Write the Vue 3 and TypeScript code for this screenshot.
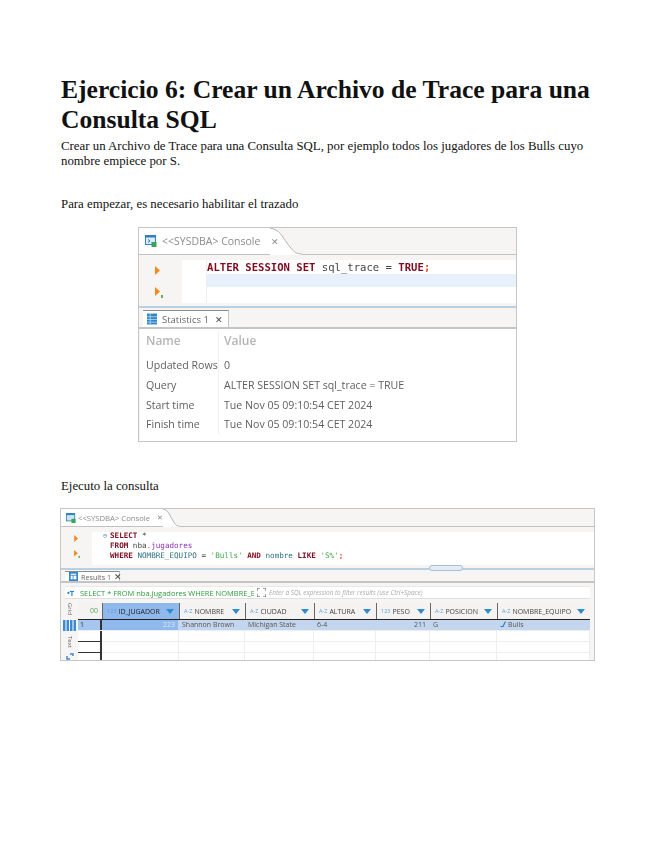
<script setup lang="ts">
const stats: [string, string][] = [
  ['Updated Rows', '0'],
  ['Query', 'ALTER SESSION SET sql_trace = TRUE'],
  ['Start time', 'Tue Nov 05 09:10:54 CET 2024'],
  ['Finish time', 'Tue Nov 05 09:10:54 CET 2024'],
]
interface Col { name: string; type: string; w: number; val: string; right?: boolean; link?: boolean }
const cols: Col[] = [
  { name: 'ID_JUGADOR', type: '123', w: 77, val: '223', right: true },
  { name: 'NOMBRE', type: 'A-Z', w: 66, val: 'Shannon Brown' },
  { name: 'CIUDAD', type: 'A-Z', w: 69, val: 'Michigan State' },
  { name: 'ALTURA', type: 'A-Z', w: 62, val: '6-4' },
  { name: 'PESO', type: '123', w: 54, val: '211', right: true },
  { name: 'POSICION', type: 'A-Z', w: 67, val: 'G' },
  { name: 'NOMBRE_EQUIPO', type: 'A-Z', w: 93, val: 'Bulls', link: true },
]
</script>

<template>
  <main class="page">
    <h1 class="title">Ejercicio 6: Crear un Archivo de Trace para una Consulta SQL</h1>
    <p class="intro">Crear un Archivo de Trace para una Consulta SQL, por ejemplo todos los jugadores de los Bulls cuyo nombre empiece por S.</p>
    <p class="lead first">Para empezar, es necesario habilitar el trazado</p>

    <section class="shot shot-a">
      <header class="tabbar">
        <div class="ctab">
          <svg class="ico" viewBox="0 0 12 12" width="12" height="12">
            <rect x="0.5" y="0.5" width="10" height="9" fill="#dcebf7" stroke="#2f7fc1" />
            <rect x="0.5" y="0.5" width="10" height="2" fill="#2f7fc1" />
            <path d="M3 4.500 5 6 3 7.500" fill="none" stroke="#2f7fc1" />
            <rect x="6.500" y="7" width="5" height="5" fill="#3aa655" />
          </svg>
          <span>&lt;&lt;SYSDBA&gt; Console</span>
          <svg class="curve" viewBox="0 0 32 27" width="32" height="27">
            <path d="M0 0C10 2 12 8 17 15 23 23 25 26 32 26V27H0Z" fill="#fff" />
            <path d="M0 0C10 2 12 8 17 15 23 23 25 26 32 26" fill="none" stroke="#b4b4b4" />
          </svg>
          <span class="x">✕</span>
        </div>
      </header>
      <div class="editor">
        <div class="gutter">
          <svg class="run" viewBox="0 0 6 9" width="6" height="9"><path d="M0 0 5 4.500 0 9Z" fill="#f08a1d" /></svg>
          <svg class="run" viewBox="0 0 8 11" width="8" height="11"><path d="M0 0 5 4.500 0 9Z" fill="#f08a1d" /><rect x="6" y="8" width="2" height="3" fill="#6ab04c" /></svg>
        </div>
        <div class="lines"></div>
        <div class="code">
          <div class="cl"><b class="kw">ALTER SESSION SET</b> sql_trace = <b class="kw">TRUE</b><b class="semi">;</b></div>
          <div class="hl"></div>
        </div>
      </div>
      <div class="sash"></div>
      <div class="tabbar2">
        <div class="stab">
          <svg viewBox="0 0 11 12" width="10" height="12">
            <rect width="11" height="12" fill="#2f86c8" />
            <path d="M3.500 0V12M0 3.500H11M0 6.500H11M0 9.500H11" stroke="#cfe4f5" stroke-width="0.800" />
          </svg>
          <span>Statistics 1</span>
          <span class="x dark">✕</span>
        </div>
      </div>
      <div class="stats">
        <div class="srow head"><span>Name</span><span>Value</span></div>
        <div v-for="r in stats" :key="r[0]" class="srow"><span>{{ r[0] }}</span><span>{{ r[1] }}</span></div>
      </div>
    </section>

    <p class="lead second">Ejecuto la consulta</p>

    <section class="shot shot-b">
      <header class="tabbar small">
        <div class="ctab">
          <svg class="ico" viewBox="0 0 12 12" width="10" height="10">
            <rect x="0.5" y="0.5" width="10" height="9" fill="#cfe3f4" stroke="#2f7fc1" />
            <rect x="0.5" y="0.5" width="10" height="2" fill="#2f7fc1" />
            <rect x="6.500" y="7" width="5" height="5" fill="#3aa655" />
          </svg>
          <span>&lt;&lt;SYSDBA&gt; Console</span>
          <svg class="curve" viewBox="0 0 16 18" width="16" height="18">
            <path d="M0 0C5 1 6 5 9 10 12 15 13 17 16 17V18H0Z" fill="#fff" />
            <path d="M0 0C5 1 6 5 9 10 12 15 13 17 16 17" fill="none" stroke="#b4b4b4" />
          </svg>
          <span class="x">✕</span>
        </div>
      </header>
      <div class="editor">
        <div class="gutter">
          <svg class="run" viewBox="0 0 6 9" width="5" height="7"><path d="M0 0 5 4.500 0 9Z" fill="#f08a1d" /></svg>
          <svg class="run" viewBox="0 0 8 11" width="6" height="8"><path d="M0 0 5 4.500 0 9Z" fill="#f08a1d" /><rect x="6" y="8" width="2" height="3" fill="#6ab04c" /></svg>
        </div>
        <div class="code">
          <div class="cl"><i class="fold">⊖</i><b class="kw">SELECT</b> *</div>
          <div class="cl"><b class="kw">FROM</b> nba<i class="dot">.</i><span class="tbl">jugadores</span></div>
          <div class="cl"><b class="kw">WHERE</b> <span class="colr">NOMBRE_EQUIPO</span> = <span class="str">'Bulls'</span> <b class="kw">AND</b> <span class="colr">nombre</span> <b class="kw">LIKE</b> <span class="str">'S%'</span><b class="semi">;</b></div>
        </div>
      </div>
      <div class="sash"><span class="knob"></span></div>
      <div class="tabbar2">
        <div class="stab">
          <svg viewBox="0 0 11 11" width="9" height="9">
            <rect x="1" y="1" width="9" height="9" fill="none" stroke="#2f86c8" stroke-width="2" />
            <path d="M1 4H10M5 4V10" stroke="#2f86c8" />
          </svg>
          <span>Results 1</span>
          <span class="x dark">✕</span>
        </div>
      </div>
      <div class="filter">
        <span class="tico">•T</span>
        <span class="fsql">SELECT * FROM nba.jugadores WHERE NOMBRE_E</span>
        <svg class="fexp" viewBox="0 0 9 9" width="9" height="9">
          <path d="M0 3V0H3M6 0H9V3M9 6V9H6M3 9H0V6" fill="none" stroke="#555" />
        </svg>
        <span class="fhint">Enter a SQL expression to filter results (use Ctrl+Space)</span>
      </div>
      <div class="results">
        <div class="side">
          <span class="vt">Grid</span>
          <svg viewBox="0 0 13 11" width="13" height="11">
            <path d="M0 0H13V11H0Z" fill="#3e8ad0" />
            <path d="M3 0V11M6.500 0V11M10 0V11" stroke="#fff" />
          </svg>
          <span class="vt second-vt">Text</span>
          <svg viewBox="0 0 8 7" width="8" height="7">
            <path d="M1 3V6H4M7 3V1H4" fill="none" stroke="#3e8ad0" stroke-width="1.500" />
          </svg>
        </div>
        <div class="grid">
          <div class="hrow">
            <div class="rnum"><span>00</span></div>
            <div v-for="(c, i) in cols" :key="c.name" class="hcell" :class="{ sel: i === 0 }" :style="{ width: c.w + 'px' }">
              <span class="type">{{ c.type }}</span>
              <span class="nm">{{ c.name }}</span>
              <svg viewBox="0 0 8 5" width="8" height="5"><path d="M0 0H8L4 5Z" fill="#2e8bd0" /></svg>
            </div>
          </div>
          <div class="drow first-row">
            <div class="rnum">1</div>
            <div v-for="(c, i) in cols" :key="c.name" class="dcell" :class="{ sel: i === 0, right: c.right }" :style="{ width: c.w + 'px' }">
              <svg v-if="c.link" class="lnk" viewBox="0 0 6 6" width="6" height="6"><path d="M0.500 5.500H3L5.500 0.500" fill="none" stroke="#2e7fc5" stroke-width="1.200" /></svg>{{ c.val }}
            </div>
          </div>
          <div v-for="n in 3" :key="n" class="drow">
            <div class="rnum"></div>
            <div v-for="c in cols" :key="c.name" class="dcell" :style="{ width: c.w + 'px' }"></div>
          </div>
        </div>
      </div>
    </section>
  </main>
</template>

<style scoped>
.page {
  width: 655px;
  height: 848px;
  box-sizing: border-box;
  padding: 75px 0 0 61px;
  font-family: "Liberation Serif", serif;
  color: #111;
  background: #fff;
  overflow: hidden;
}
.title {
  margin: 0;
  width: 540px;
  font-size: 25.6px;
  line-height: 30px;
  font-weight: 700;
}
.intro {
  margin: 4px 0 0;
  width: 530px;
  font-size: 12.85px;
  line-height: 15px;
}
.lead { margin: 0; font-size: 12.85px; line-height: 15px; }
.first { margin-top: 28px; }
.second { margin-top: 37px; }

.shot {
  box-sizing: border-box;
  border: 1px solid #c6c6c6;
  background: #f6f5f4;
  font-family: "Open Sans", sans-serif;
  color: #666;
  filter: blur(0.5px);
  overflow: hidden;
}
svg { flex: none; }
.shot-a { margin: 15px 0 0 77px; width: 379px; height: 215px; font-size: 10.500px; }
.shot-b { margin: 14px 0 0 -1px; width: 535px; height: 153px; font-size: 7.700px; }

.tabbar { height: 26px; border-bottom: 1px solid #c2c2c2; display: flex; }
.tabbar.small { height: 17px; }
.ctab {
  position: relative;
  width: 131px;
  background: #fff;
  display: flex;
  align-items: center;
  gap: 5px;
  padding-left: 6px;
  box-sizing: border-box;
  color: #8b8b8b;
  white-space: nowrap;
}
.small .ctab { width: 102px; padding-left: 5px; gap: 2px; }
.curve { position: absolute; left: 100%; top: 0; }
.x { position: relative; margin-left: 6px; font-size: 9px; color: #8a8a8a; }
.x.dark { color: #444; margin-left: auto; }
.small .x { font-size: 7px; margin-left: 5px; }

.editor { display: flex; background: #fff; position: relative; }
.shot-a .editor { height: 43px; margin-top: 5px; }
.shot-b .editor { height: 33px; margin-top: 5px; }
.gutter { background: #f6f5f4; position: relative; display: flex; flex-direction: column; box-sizing: border-box; }
.shot-a .gutter { width: 43px; padding: 6px 0 0 16px; gap: 12px; }
.shot-b .gutter { width: 31px; padding: 3px 0 0 13px; gap: 8px; }
.lines { width: 24px; border-right: 1px solid #eee; }
.code { flex: 1; font-family: "DejaVu Sans Mono", monospace; color: #444; white-space: pre; }
.shot-a .code { font-size: 10.600px; line-height: 13px; padding-top: 1px; }
.shot-b .code { font-size: 7.600px; line-height: 10px; padding: 0 0 0 18px; margin-top: -1px; }
.cl { position: relative; }
.shot-a .hl { height: 13px; background: #e8f0fb; }
.kw { color: #7f0a1d; font-weight: 700; }
.semi { color: #e8502f; font-weight: 700; }
.fold { position: absolute; left: -7px; font-style: normal; color: #6a8fb5; font-size: 7px; }
.dot { font-style: normal; color: #d03a3a; }
.tbl { color: #8c2fb0; }
.colr { color: #2a6f7f; }
.str { color: #3fa648; }

.sash { position: relative; border-bottom: 2px solid #b9cfe2; margin-top: 3px; height: 0; }
.knob {
  position: absolute;
  left: 368px;
  top: -3px;
  width: 32px;
  height: 4px;
  background: #e3ecf4;
  border: 1px solid #a7c1d8;
  border-radius: 3px;
}
.tabbar2 { display: flex; padding-left: 4px; border-bottom: 2px solid #c4c4c4; }
.shot-a .tabbar2 { height: 17px; margin-top: 2px; }
.shot-b .tabbar2 { height: 10px; margin-top: 1px; }
.stab {
  display: flex;
  align-items: center;
  gap: 5px;
  padding: 0 5px 0 4px;
  background: #fff;
  border-top: 1px solid #8d8d8d;
  border-right: 1px solid #c4c4c4;
  color: #666;
  white-space: nowrap;
  box-sizing: border-box;
}
.shot-a .stab { width: 86px; font-size: 9.500px; }
.shot-b .stab { width: 55px; font-size: 7.200px; gap: 3px; }

.stats { background: #fff; margin-left: 1px; height: 112px; padding-top: 2px; box-sizing: border-box; }
.srow { display: grid; grid-template-columns: 73px 1fr; height: 19.600px; line-height: 20px; padding-left: 6px; font-size: 10.600px; color: #5e5e5e; white-space: nowrap; }
.srow span:last-child { padding-left: 5px; }
.srow span:first-child { border-right: 1px solid #f0f0f0; }
.srow.head { height: 24.400px; line-height: 20px; font-size: 12px; font-weight: 600; color: #b5b5b5; }

.filter {
  display: flex;
  align-items: center;
  gap: 3px;
  height: 11px;
  margin: 3px 4px 0;
  padding-left: 2px;
  background: #fff;
  border-top: 1px solid #e8e8e8;
  border-bottom: 1px solid #e0e0e0;
  white-space: nowrap;
  overflow: hidden;
  font-size: 7.500px;
}
.tico { color: #2e7fc5; font-weight: 700; width: 10px; flex: none; }
.fsql { color: #2e9a3e; width: 174px; overflow: hidden; flex: none; }
.fhint { color: #aaa; font-style: italic; font-size: 6.400px; }

.results { display: flex; margin-top: 4px; height: 58px; overflow: hidden; }
.side { width: 17px; display: flex; flex-direction: column; align-items: center; gap: 3px; color: #666; font-size: 6px; }
.vt { writing-mode: vertical-rl; height: 14px; line-height: 8px; }
.second-vt { margin-top: 2px; }
.grid { width: 512px; background: #fff; }
.hrow { display: flex; height: 16px; background: #f4f3f2; border-bottom: 1px solid #222; }
.drow { display: flex; height: 10px; border-bottom: 1px solid #eee; }
.rnum { width: 24px; flex: none; box-sizing: border-box; border-right: 2px solid #333; color: #333; font-size: 7px; padding-left: 2px; }
.hrow .rnum { text-align: right; padding-right: 4px; color: #59a85a; border-right: 0; line-height: 16px; }
.drow .rnum { border-bottom: 1px solid #333; height: 11px; }
.first-row .rnum { background: #a4c6f1; border-bottom: 0; line-height: 10px; height: 10px; }
.hcell {
  flex: none;
  box-sizing: border-box;
  display: flex;
  align-items: center;
  gap: 2px;
  padding: 0 5px 0 4px;
  border-left: 1px solid #666;
  color: #444;
  white-space: nowrap;
  overflow: hidden;
  font-size: 7px;
}
.hcell.sel { background: #8fb9ec; color: #222; }
.type { color: #5f9fd6; font-size: 5.500px; }
.nm { flex: 1; overflow: hidden; }
.dcell {
  flex: none;
  box-sizing: border-box;
  padding: 0 3px;
  border-right: 1px solid #eee;
  color: #555;
  font-size: 7px;
  line-height: 10px;
  white-space: nowrap;
  overflow: hidden;
}
.dcell.right { text-align: right; }
.lnk { margin-right: 2px; }
.first-row .dcell { background: #c4d6ed; border-color: #c4d6ed; }
.first-row .dcell.sel { background: #8fb9ec; color: #dbe8f8; }
</style>
